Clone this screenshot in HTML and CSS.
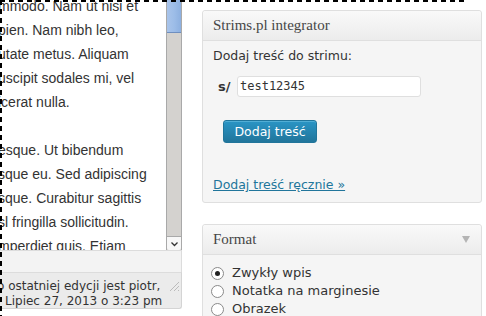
FILE: index.html
```html
<!DOCTYPE html>
<html lang="pl">
<head>
<meta charset="utf-8">
<link rel="stylesheet" href="styles.css">
</head>
<body>
<div class="page">
  <div class="editor">
    <div class="editor-area">
      <div class="text">
        <div class="lines">
          <p>mmodo. Nam ut nisi et</p>
          <p>pien. Nam nibh leo,</p>
          <p>utate metus. Aliquam</p>
          <p>uscipit sodales mi, vel</p>
          <p>icerat nulla.</p>
          <p>&nbsp;</p>
          <p>esque. Ut bibendum</p>
          <p>sque eu. Sed adipiscing</p>
          <p>sque. Curabitur sagittis</p>
          <p>sl fringilla sollicitudin.</p>
          <p>mperdiet quis. Etiam</p>
        </div>
      </div>
      <div class="scrollbar">
        <div class="thumb"></div>
        <div class="track"></div>
        <div class="arrow">
          <svg width="9" height="6" viewBox="0 0 9 6"><path d="M1.5 1.5 L4.5 4.5 L7.5 1.5" fill="none" stroke="#333" stroke-width="1.3"/></svg>
        </div>
      </div>
    </div>
    <div class="band"></div>
    <div class="status">
      <p>o ostatniej edycji jest piotr,</p>
      <p>Lipiec 27, 2013 o 3:23 pm</p>
      <svg class="grip" width="12" height="12" viewBox="0 0 12 12"><path d="M11 2 L2 11 M11 6 L6 11 M11 10 L10 11" stroke="#bbb" stroke-width="1"/></svg>
    </div>
  </div>
  <div class="side">
    <section class="box box-strims">
      <h3 class="box-title">Strims.pl integrator</h3>
      <div class="inside">
        <p class="lead">Dodaj treść do strimu:</p>
        <div class="field">
          <span class="prefix">s/</span>
          <span class="input">test12345</span>
        </div>
        <button class="btn">Dodaj treść</button>
        <a class="manual" href="#">Dodaj treść ręcznie »</a>
      </div>
    </section>
    <section class="box box-format">
      <h3 class="box-title">Format <span class="toggle"></span></h3>
      <div class="inside radios">
        <label class="radio"><span class="dot checked"></span>Zwykły wpis</label>
        <label class="radio"><span class="dot"></span>Notatka na marginesie</label>
        <label class="radio"><span class="dot"></span>Obrazek</label>
      </div>
    </section>
  </div>
</div>
<div class="marquee-top"></div>
<div class="marquee-left"></div>
</body>
</html>
```
FILE: styles.css
```css
html, body {
  margin: 0;
  padding: 0;
  background: #fff;
}
body {
  width: 486px;
  height: 316px;
  overflow: hidden;
  position: relative;
  font-family: "DejaVu Sans", sans-serif;
  color: #333;
}
p { margin: 0; }

.page {
  display: flex;
  align-items: flex-start;
}

/* left editor */
.editor {
  width: 182px;
  flex: none;
}
.editor-area {
  display: flex;
  height: 250px;
  background: #fff;
}
.text {
  width: 166px;
  overflow: hidden;
}
.lines {
  margin-top: -6px;
  margin-left: -2px;
  font-family: "Liberation Sans", Arial, sans-serif;
  font-size: 14px;
  line-height: 24px;
  color: #333;
  white-space: nowrap;
}
.scrollbar {
  width: 14px;
  border-left: 1px solid #a9a9a9;
  border-right: 1px solid #a9a9a9;
  display: flex;
  flex-direction: column;
  background: #d4d2cf;
}
.thumb {
  height: 32px;
  background: linear-gradient(to right, #a9c4ea, #9dbde8 50%, #8db0e0);
  border-bottom: 1px solid #6f8fbf;
}
.track { flex: 1; }
.arrow {
  height: 13px;
  background: #f7f7f7;
  border-top: 1px solid #a9a9a9;
  border-radius: 0 0 2px 2px;
  display: flex;
  align-items: center;
  justify-content: center;
}
.band {
  height: 21px;
  background: #f3f3f3;
  border-top: 1px solid #dcdcdc;
  border-right: 1px solid #dcdcdc;
}
.status {
  position: relative;
  height: 37px;
  box-sizing: border-box;
  background: #ebebeb;
  border-top: 1px solid #dcdcdc;
  border-right: 1px solid #d4d4d4;
  border-bottom: 1px solid #d4d4d4;
  border-radius: 0 0 3px 0;
  font-family: "DejaVu Sans", sans-serif;
  font-size: 12px;
  line-height: 15px;
  padding: 6px 0 0 5px;
  white-space: nowrap;
  overflow: hidden;
}
.status p:first-child { margin-left: -8px; }
.grip {
  position: absolute;
  right: 1px;
  top: 7px;
}

/* right column */
.side {
  margin-left: 20px;
  width: 280px;
  padding-top: 10px;
  display: flex;
  flex-direction: column;
  gap: 21px;
}
.box {
  border: 1px solid #dfdfdf;
  border-radius: 3px;
  background: #f5f5f5;
  box-shadow: inset 0 1px 0 #fff;
}
.box-title {
  margin: 0;
  height: 29px;
  border-bottom: 1px solid #dfdfdf;
  background: linear-gradient(to bottom, #f9f9f9, #ececec);
  border-radius: 3px 3px 0 0;
  font-family: "Liberation Serif", Georgia, serif;
  font-weight: normal;
  font-size: 15px;
  line-height: 29px;
  color: #464646;
  padding: 0 10px;
  display: flex;
  justify-content: space-between;
  align-items: center;
}
.inside {
  padding: 0 10px;
  font-size: 12.5px;
}
.box-strims .inside {
  height: 161px;
  display: flex;
  flex-direction: column;
  align-items: flex-start;
}
.lead {
  margin-top: 6px;
  line-height: 18px;
}
.field {
  display: flex;
  align-items: center;
  margin-top: 11px;
  margin-left: 5px;
}
.prefix {
  font-weight: bold;
  font-size: 13px;
  width: 19px;
}
.input {
  width: 180px;
  height: 19px;
  border: 1px solid #dfdfdf;
  border-radius: 3px;
  background: #fff;
  font-family: "DejaVu Sans Mono", monospace;
  font-size: 12px;
  line-height: 19px;
  padding-left: 2px;
  color: #333;
}
.btn {
  margin-top: 23px;
  margin-left: 10px;
  height: 23px;
  width: 94px;
  padding: 0;
  border: 1px solid #21759b;
  border-radius: 3px;
  background: linear-gradient(to bottom, #2a95c5, #21759b);
  color: #fff;
  font-family: "DejaVu Sans", sans-serif;
  font-size: 12.5px;
  line-height: 21px;
  box-shadow: inset 0 1px 0 rgba(120,200,230,0.5);
}
.manual {
  margin-top: 33px;
  color: #21759b;
  text-decoration: underline;
  line-height: 18px;
}
.toggle {
  width: 0;
  height: 0;
  border-left: 4px solid transparent;
  border-right: 4px solid transparent;
  border-top: 7px solid #b4b4b4;
  margin-right: 1px;
}
.radios {
  padding-top: 9px;
  display: flex;
  flex-direction: column;
  font-size: 13px;
}
.radio {
  display: flex;
  align-items: center;
  height: 18px;
  line-height: 18px;
}
.dot {
  width: 11px;
  height: 11px;
  border: 1px solid #8a8a8a;
  border-radius: 50%;
  background: #fff;
  margin-left: -2px;
  margin-right: 8px;
  box-sizing: content-box;
  display: flex;
  align-items: center;
  justify-content: center;
}
.dot.checked::after {
  content: "";
  width: 5px;
  height: 5px;
  border-radius: 50%;
  background: #222;
}

/* selection marquee overlaid on top */
.marquee-top {
  position: absolute;
  left: 0;
  top: 0;
  width: 468px;
  height: 2px;
  background: repeating-linear-gradient(to right, #000 0 5px, transparent 5px 9px);
}
.marquee-left {
  position: absolute;
  left: 0;
  top: 0;
  width: 2px;
  height: 316px;
  background: repeating-linear-gradient(to bottom, #000 0 5px, transparent 5px 9px);
}
```
